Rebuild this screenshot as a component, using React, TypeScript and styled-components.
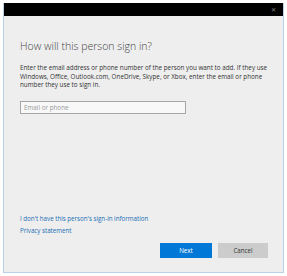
import React from 'react'
import styled, { createGlobalStyle } from 'styled-components'

const GlobalStyle = createGlobalStyle`
  html, body {
    margin: 0;
    padding: 0;
    background: #ffffff;
  }
  body {
    font-family: "Open Sans", "Noto Sans", "Liberation Sans", sans-serif;
  }
`

const Page = styled.div`
  width: 287px;
  height: 276px;
  padding: 3px;
  box-sizing: border-box;
`

const Window = styled.div`
  display: flex;
  flex-direction: column;
  height: 270px;
  background: #eeeeee;
  border: 1px solid #b9d1e6;
  border-top: none;
  box-sizing: border-box;
`

const TitleBar = styled.div`
  display: flex;
  justify-content: flex-end;
  align-items: center;
  height: 13px;
  background: #000000;
  padding-right: 7px;
`

const CloseGlyph = styled.span`
  color: #8a8a8a;
  font-size: 6px;
  line-height: 6px;
  margin-top: 1px;
`

const Content = styled.div`
  flex: 1;
  display: flex;
  flex-direction: column;
  padding: 23px 15px 14px 16px;
`

const Heading = styled.h1`
  margin: 0 0 11px 0;
  font-size: 10.5px;
  line-height: 14px;
  font-weight: 300;
  color: #444444;
`

const Description = styled.p`
  margin: 0 0 11px 0;
  font-size: 6.3px;
  line-height: 8.7px;
  color: #333333;
`

const EmailInput = styled.input`
  width: 166px;
  height: 13px;
  box-sizing: border-box;
  border: 1px solid #a6a6a6;
  background: #f8f8f8;
  padding: 0 3px;
  font-family: inherit;
  font-size: 6.3px;
  color: #333;
  outline: none;

  &::placeholder {
    color: #9a9a9a;
  }
`

const Spacer = styled.div`
  flex: 1;
`

const LinkText = styled.a`
  display: block;
  font-size: 6.2px;
  line-height: 12px;
  color: #1a6db3;
  text-decoration: none;
  cursor: pointer;
`

const ButtonRow = styled.div`
  display: flex;
  justify-content: flex-end;
  gap: 6px;
  margin-top: 6px;
`

const Button = styled.button<{ $primary?: boolean }>`
  width: ${(p) => (p.$primary ? '52px' : '50px')};
  height: 15px;
  border: none;
  padding: 0;
  font-family: inherit;
  font-size: 6.2px;
  background: ${(p) => (p.$primary ? '#0078d7' : '#cccccc')};
  color: ${(p) => (p.$primary ? '#ffffff' : '#333333')};
  cursor: pointer;
`

export default function App() {
  return (
    <>
      <GlobalStyle />
      <Page>
        <Window>
          <TitleBar>
            <CloseGlyph>✕</CloseGlyph>
          </TitleBar>
          <Content>
            <Heading>How will this person sign in?</Heading>
            <Description>
              Enter the email address or phone number of the person you want to add. If they use
              Windows, Office, Outlook.com, OneDrive, Skype, or Xbox, enter the email or phone
              number they use to sign in.
            </Description>
            <EmailInput type="text" placeholder="Email or phone" />
            <Spacer />
            <LinkText>I don't have this person's sign-in information</LinkText>
            <LinkText>Privacy statement</LinkText>
            <ButtonRow>
              <Button $primary>Next</Button>
              <Button>Cancel</Button>
            </ButtonRow>
          </Content>
        </Window>
      </Page>
    </>
  )
}
